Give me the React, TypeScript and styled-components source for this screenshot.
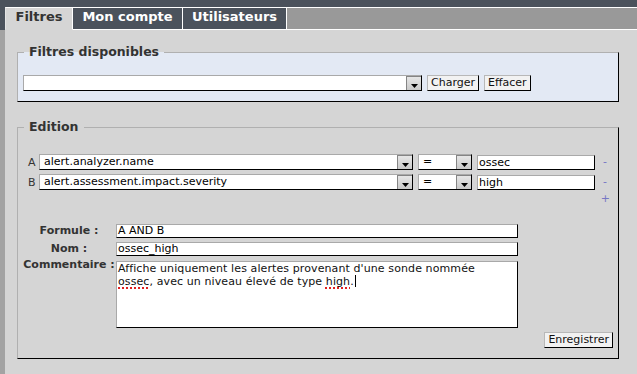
import React from 'react';
import styled, { createGlobalStyle } from 'styled-components';

const GlobalStyle = createGlobalStyle`
  html, body {
    margin: 0;
    padding: 0;
    background: #d5d5d5;
  }
  body {
    font-family: "DejaVu Sans", Verdana, sans-serif;
    font-size: 11px;
    color: #000;
  }
`;

const Page = styled.div`
  min-height: 100vh;
  display: flex;
  flex-direction: column;
  background: #d5d5d5;
`;

const TopBar = styled.div`
  height: 7px;
  background: #4b525c;
`;

const TabRow = styled.nav`
  display: flex;
  height: 23px;
`;

const TabCorner = styled.div`
  width: 5px;
  background: #4b525c;
`;

const Tab = styled.div<{ $active?: boolean; $width: number }>`
  box-sizing: border-box;
  width: ${(p) => p.$width}px;
  height: 23px;
  padding-bottom: 4px;
  border-top: 1px solid #fff;
  border-bottom: 1px solid ${(p) => (p.$active ? '#d5d5d5' : '#fff')};
  border-right: 1px solid #fff;
  border-left: ${(p) => (p.$active ? '1px solid #e4e4e4' : 'none')};
  background: ${(p) => (p.$active ? '#d5d5d5' : '#4b525c')};
  color: ${(p) => (p.$active ? '#333' : '#fff')};
  font-size: 13px;
  font-weight: bold;
  line-height: 17px;
  text-align: center;
  white-space: nowrap;
  cursor: pointer;
`;

const TabFiller = styled.div`
  flex: 1;
  box-sizing: border-box;
  border-top: 1px solid #fff;
  border-bottom: 1px solid #fff;
  background: #999;
`;

const Body = styled.div`
  flex: 1;
  display: flex;
`;

const SideStrip = styled.div`
  width: 5px;
  background: #a3a3a3;
`;

const Content = styled.main`
  flex: 1;
  padding: 0 18px 16px 12px;
`;

const Fieldset = styled.fieldset<{ $tinted?: boolean; $top: number; $padTop: number }>`
  margin: ${(p) => p.$top}px 0 0 0;
  padding: ${(p) => p.$padTop}px 5px 10px 5px;
  min-width: 0;
  border: 1px solid;
  border-color: #b0b0b0 #000 #000 #b0b0b0;
  background: ${(p) => (p.$tinted ? '#e3e9f4' : 'transparent')};
`;

const Legend = styled.legend`
  margin-left: 1px;
  padding: 0 5px;
  font-size: 12.5px;
  font-weight: bold;
  line-height: 16px;
  color: #333;
`;

const LoadRow = styled.div`
  display: flex;
  align-items: center;
  gap: 5px;
`;

const SelectFrame = styled.div<{ $width: number }>`
  box-sizing: border-box;
  display: flex;
  width: ${(p) => p.$width}px;
  height: 16px;
  background: #fff;
  border: 1px solid;
  border-color: #a9a9a9 #000 #000 #a9a9a9;
`;

const SelectValue = styled.span`
  flex: 1;
  padding-left: 4px;
  line-height: 14px;
  white-space: nowrap;
  overflow: hidden;
`;

const SelectArrow = styled.span`
  box-sizing: border-box;
  width: 15px;
  height: 14px;
  display: flex;
  align-items: flex-end;
  justify-content: center;
  padding-bottom: 2px;
  border-left: 1px solid #858585;
  border-top: 1px solid #858585;
  background: linear-gradient(#e6e6e6, #c9c9c9);
`;

const Button = styled.button`
  box-sizing: border-box;
  height: 16px;
  margin: 0;
  padding: 0 3px;
  font-family: "DejaVu Sans", Verdana, sans-serif;
  font-size: 11px;
  line-height: 14px;
  color: #111;
  background: #f2f2f2;
  border: 1px solid;
  border-color: #b8b8b8 #000 #000 #b8b8b8;
  border-radius: 0;
  cursor: pointer;
`;

const CriteriaList = styled.div`
  display: flex;
  flex-direction: column;
  gap: 4px;
`;

const CriteriaRow = styled.div`
  display: flex;
  align-items: center;
  height: 16px;
  padding-left: 5px;
`;

const RowLabel = styled.span`
  width: 11px;
  color: #333;
`;

const Spaced = styled.div<{ $left: number }>`
  margin-left: ${(p) => p.$left}px;
`;

const TextField = styled.div<{ $width: number; $height: number }>`
  box-sizing: border-box;
  width: ${(p) => p.$width}px;
  height: ${(p) => p.$height}px;
  padding: 0 1px;
  background: #fff;
  border: 1px solid;
  border-color: #a9a9a9 #000 #000 #a9a9a9;
  line-height: ${(p) => p.$height - 2}px;
  white-space: nowrap;
  overflow: hidden;
`;

const ActionLink = styled.span`
  color: #7676c4;
  font-size: 11px;
  line-height: 14px;
  cursor: pointer;
`;

const PlusRow = styled.div`
  display: flex;
  justify-content: flex-end;
  height: 14px;
  margin-top: 2px;
  padding-right: 3px;
`;

const FormGrid = styled.div`
  display: grid;
  grid-template-columns: 84px 402px;
  column-gap: 5px;
  row-gap: 4px;
  margin: 18px 0 0 4px;
`;

const FieldLabel = styled.label<{ $top?: boolean }>`
  justify-self: center;
  align-self: ${(p) => (p.$top ? 'start' : 'center')};
  margin-top: ${(p) => (p.$top ? '-1px' : '0')};
  font-weight: bold;
  color: #333;
  line-height: ${(p) => (p.$top ? '12px' : '14px')};
  white-space: nowrap;
`;

const CommentBox = styled.div`
  box-sizing: border-box;
  width: 402px;
  height: 67px;
  margin-top: 1px;
  padding: 0 1px;
  background: #fff;
  border: 1px solid;
  border-color: #a9a9a9 #000 #000 #a9a9a9;
  line-height: 13px;
  letter-spacing: 0.1px;
  color: #111;
`;

const Misspelled = styled.span`
  text-decoration: underline dotted #e02020;
  text-decoration-thickness: 2px;
  text-underline-offset: 2px;
`;

const Caret = styled.span`
  display: inline-block;
  width: 1px;
  height: 12px;
  margin-left: 1px;
  vertical-align: -2px;
  background: #000;
`;

const FooterRow = styled.div`
  display: flex;
  justify-content: flex-end;
  margin-top: 4px;
`;

const ArrowIcon = () => (
  <svg width="7" height="4" viewBox="0 0 7 4">
    <polygon points="0,0 7,0 3.5,4" fill="#000" />
  </svg>
);

const FakeSelect: React.FC<{ width: number; value: string }> = ({ width, value }) => (
  <SelectFrame $width={width}>
    <SelectValue>{value}</SelectValue>
    <SelectArrow>
      <ArrowIcon />
    </SelectArrow>
  </SelectFrame>
);

const tabs = [
  { label: 'Filtres', width: 68, active: true },
  { label: 'Mon compte', width: 110 },
  { label: 'Utilisateurs', width: 104 },
];

const criteria = [
  { key: 'A', path: 'alert.analyzer.name', op: '=', value: 'ossec' },
  { key: 'B', path: 'alert.assessment.impact.severity', op: '=', value: 'high' },
];

const App: React.FC = () => {
  return (
    <Page>
      <GlobalStyle />
      <TopBar />
      <TabRow>
        <TabCorner />
        {tabs.map((t) => (
          <Tab key={t.label} $active={t.active} $width={t.width}>
            {t.label}
          </Tab>
        ))}
        <TabFiller />
      </TabRow>
      <Body>
        <SideStrip />
        <Content>
          <Fieldset $tinted $top={14} $padTop={15}>
            <Legend>Filtres disponibles</Legend>
            <LoadRow>
              <FakeSelect width={399} value="" />
              <Button>Charger</Button>
              <Button>Effacer</Button>
            </LoadRow>
          </Fieldset>

          <Fieldset $top={17} $padTop={19}>
            <Legend>Edition</Legend>
            <CriteriaList>
              {criteria.map((c) => (
                <CriteriaRow key={c.key}>
                  <RowLabel>{c.key}</RowLabel>
                  <FakeSelect width={374} value={c.path} />
                  <Spaced $left={5}>
                    <FakeSelect width={54} value={c.op} />
                  </Spaced>
                  <Spaced $left={5}>
                    <TextField $width={118} $height={15}>{c.value}</TextField>
                  </Spaced>
                  <Spaced $left={8}>
                    <ActionLink>-</ActionLink>
                  </Spaced>
                </CriteriaRow>
              ))}
            </CriteriaList>
            <PlusRow>
              <ActionLink>+</ActionLink>
            </PlusRow>

            <FormGrid>
              <FieldLabel>Formule :</FieldLabel>
              <TextField $width={402} $height={14}>A AND B</TextField>
              <FieldLabel>Nom :</FieldLabel>
              <TextField $width={402} $height={14}>ossec_high</TextField>
              <FieldLabel $top>Commentaire :</FieldLabel>
              <CommentBox>
                Affiche uniquement les alertes provenant d'une sonde nommée
                <br />
                <Misspelled>ossec</Misspelled>, avec un niveau élevé de type <Misspelled>high</Misspelled>.
                <Caret />
              </CommentBox>
            </FormGrid>

            <FooterRow>
              <Button>Enregistrer</Button>
            </FooterRow>
          </Fieldset>
        </Content>
      </Body>
    </Page>
  );
};

export default App;
